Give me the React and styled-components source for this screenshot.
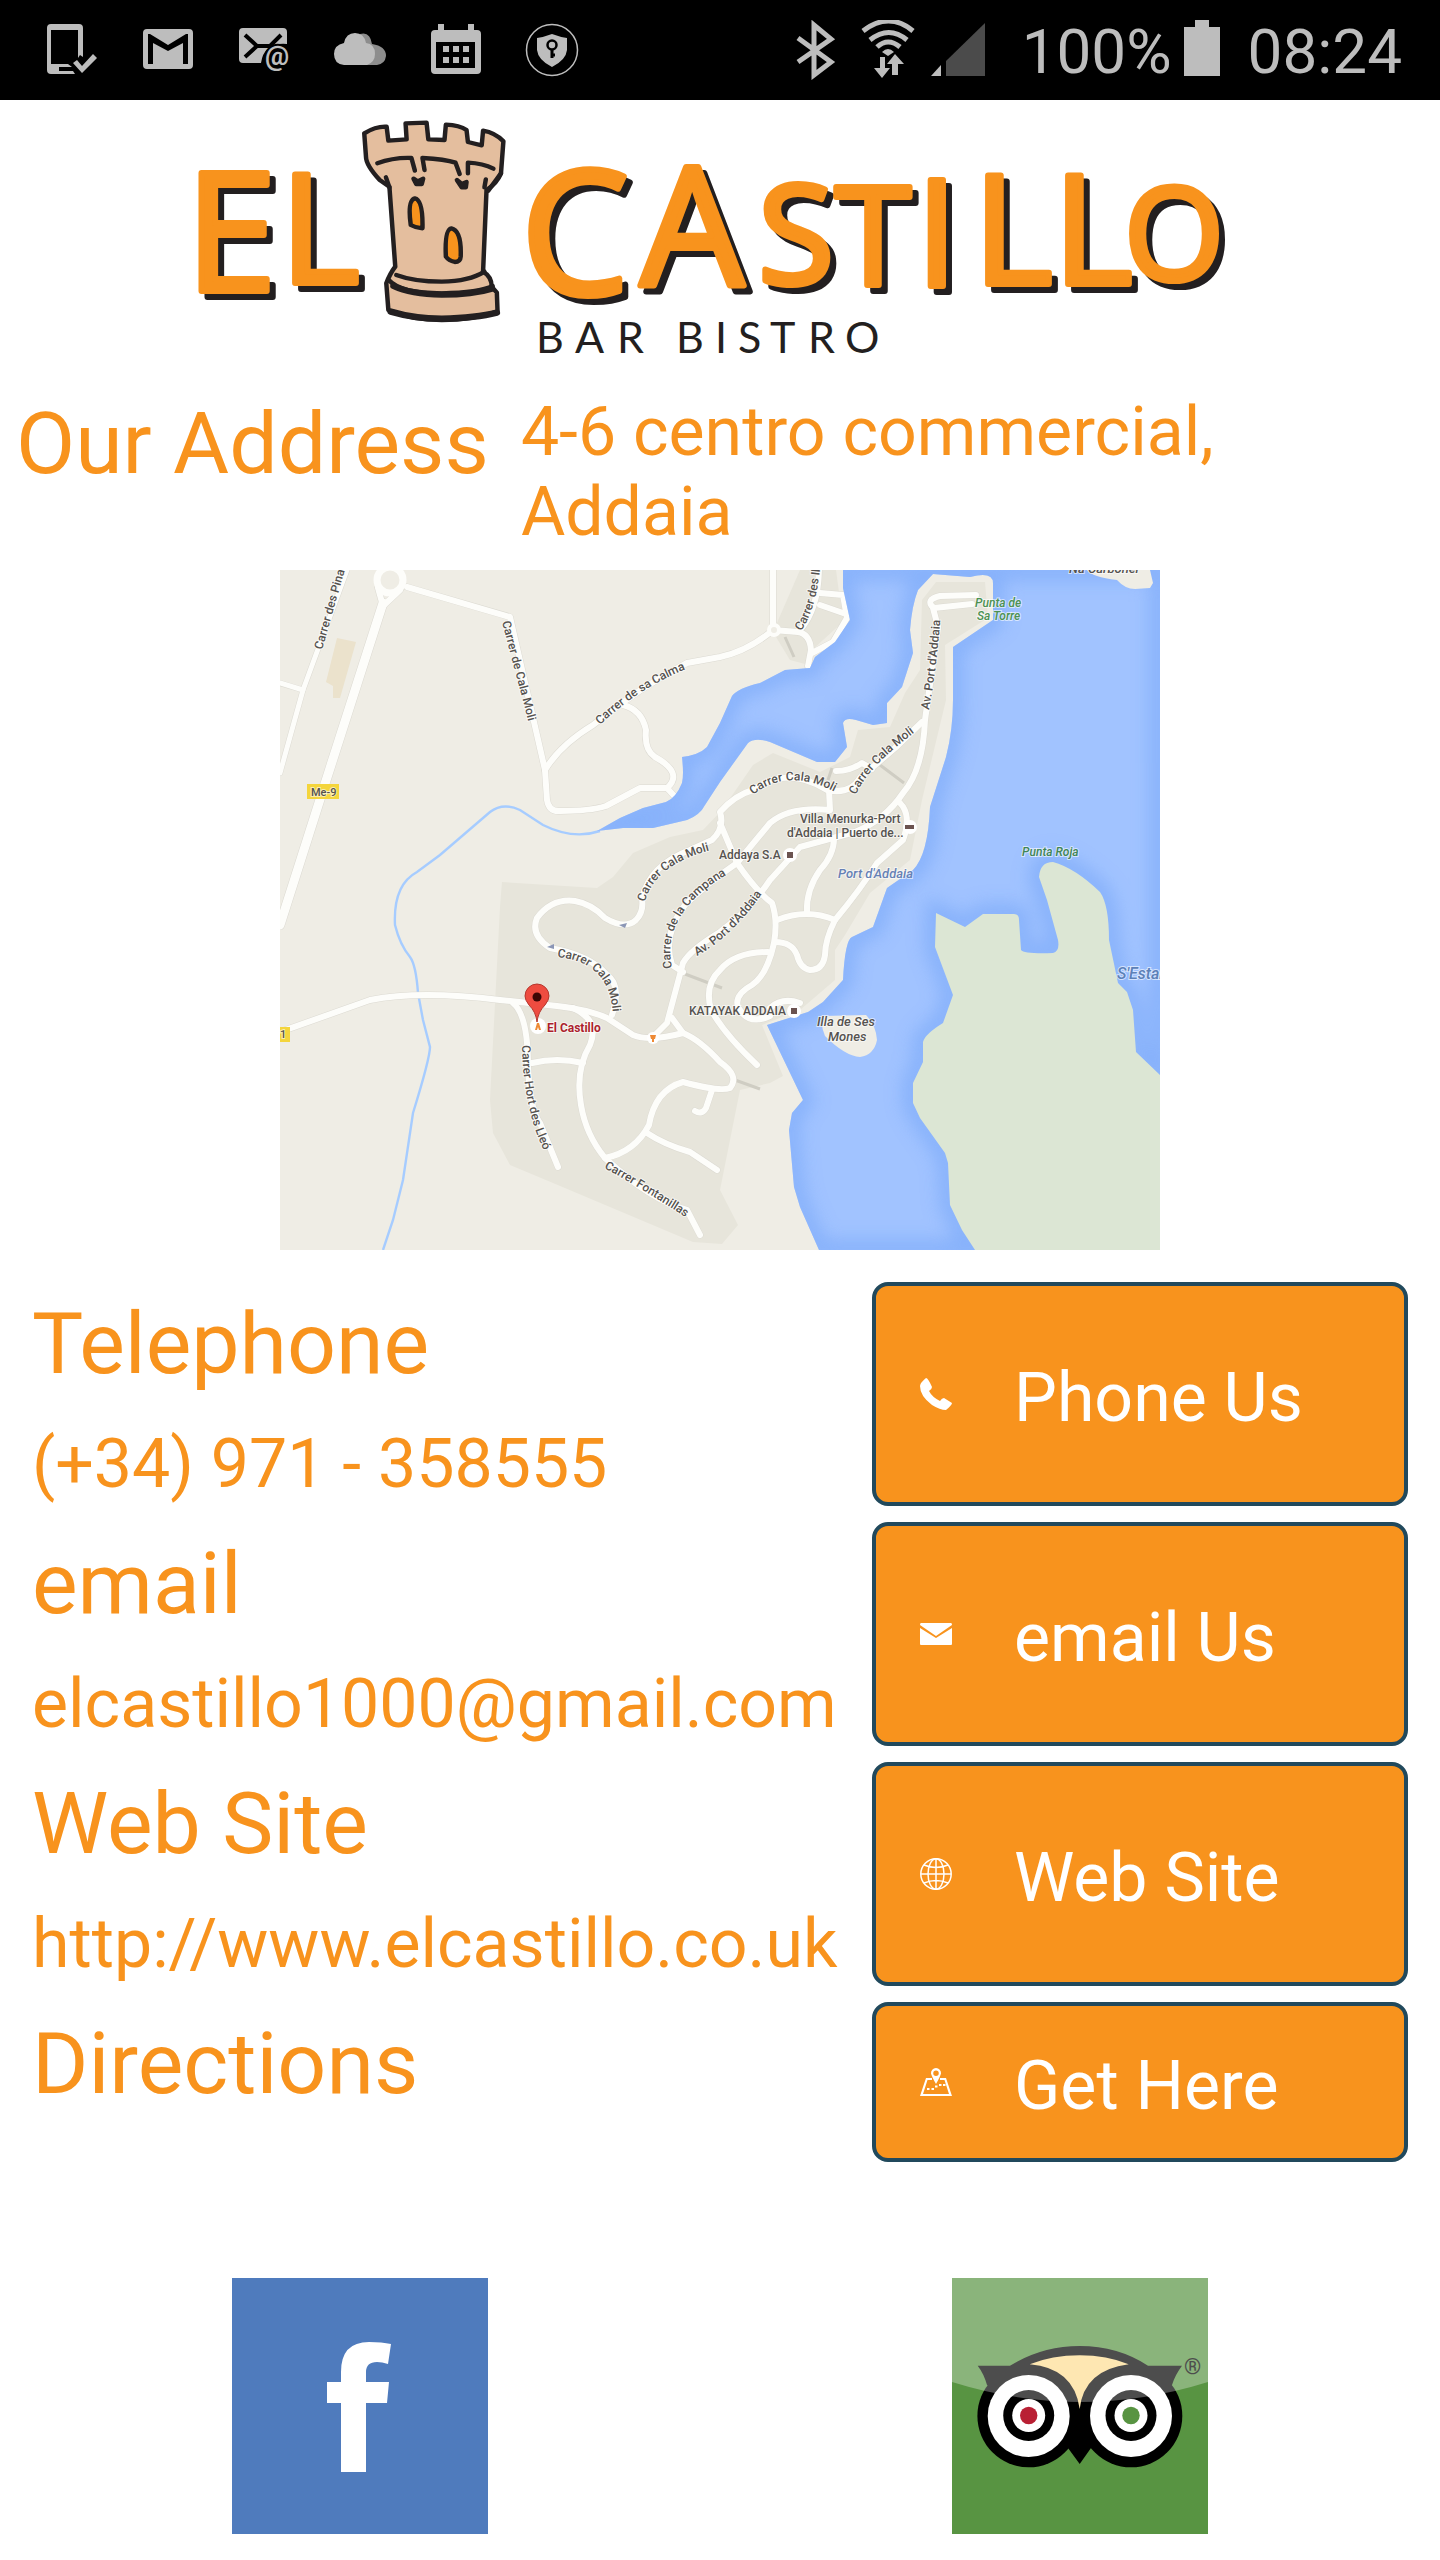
import React from "react";
import styled, { createGlobalStyle } from "styled-components";

const orange = "#f8931d";
const ink = "#231f20";
const statusGrey = "#bdbdbd";

const GlobalStyle = createGlobalStyle`
  *, *::before, *::after { box-sizing: border-box; }
  body {
    margin: 0;
    background: #fff;
    color: ${orange};
    font-family: Roboto, "Liberation Sans", sans-serif;
  }
`;

/* ---------- layout ---------- */

const Screen = styled.div`
  display: flex;
  flex-direction: column;
`;

const StatusBar = styled.header`
  display: flex;
  align-items: center;
  justify-content: space-between;
  height: 100px;
  padding: 0 38px 0 44px;
  background: #000;
  color: ${statusGrey};
  font-size: 62px;
  line-height: 76px;
`;

const Notifications = styled.div`
  display: flex;
  align-items: center;
  gap: 40px;
`;

const Indicators = styled.div`
  display: flex;
  align-items: center;
  gap: 12px;
`;

const StatusText = styled.span`
  padding: ${(p) => (p.$clock ? "0 0 0 16px" : "0 0 0 24px")};
  margin-top: 4px;
`;

const StatusIcon = styled.svg`
  display: block;
  flex: none;
  width: ${(p) => p.$width || 56}px;
  height: 60px;
  fill: ${statusGrey};
`;

const Banner = styled.div`
  padding: 0 190px 30px;
`;

const Logo = styled.svg`
  display: block;
  width: 100%;
  height: auto;
`;

const Lettering = styled.g`
  fill: ${orange};
  stroke: ${orange};
  stroke-width: 6px;
  stroke-linejoin: round;
  font-family: "Open Sans", "Noto Sans", sans-serif;
  font-weight: 400;
  text-anchor: middle;
  filter: drop-shadow(6px 6px 0 ${ink});
`;

const Tagline = styled.text`
  fill: ${ink};
  font-family: Lato, sans-serif;
  font-size: 43px;
`;

const AddressRow = styled.section`
  display: flex;
  align-items: flex-start;
  gap: 32px;
  padding: 0 16px 18px;
`;

const Heading = styled.h2`
  margin: 0;
  flex: none;
  font-size: 86px;
  font-weight: 400;
  line-height: 104px;
`;

const BodyText = styled.p`
  margin: 0;
  font-size: 68px;
  line-height: 80px;
  font-style: normal;
`;

const MapFrame = styled.figure`
  margin: 0;
  display: flex;
  justify-content: center;
`;

const MapDrawing = styled.svg`
  display: block;
  width: 880px;
  max-width: 100%;
  height: auto;
  font-family: Roboto, sans-serif;
`;

const ContactList = styled.main`
  display: flex;
  flex-direction: column;
  gap: 16px;
  padding: 32px 32px 0;
`;

const ContactRow = styled.section`
  display: grid;
  grid-template-columns: minmax(0, 1fr) 536px;
  gap: 16px;
  min-height: ${(p) => (p.$short ? 160 : 224)}px;
`;

const Details = styled.div`
  display: flex;
  flex-direction: column;
  gap: 28px;
  padding-top: 10px;
`;

const Action = styled.button`
  display: flex;
  align-items: center;
  padding: 0 44px;
  gap: 62px;
  border: 4px solid #21495c;
  border-radius: 16px;
  background: ${orange};
  color: #fff;
  font: inherit;
  font-size: 68px;
  line-height: 80px;
  cursor: pointer;
`;

const ActionLabel = styled.span`
  margin-top: 8px;
`;

const ActionIcon = styled.svg`
  display: block;
  flex: none;
  width: 32px;
  height: 32px;
  fill: #fff;
`;

const SocialRow = styled.nav`
  display: grid;
  grid-template-columns: 1fr 1fr;
  justify-items: center;
  padding: 116px 0 26px;
`;

const SocialLink = styled.a`
  display: flex;
  align-items: center;
  justify-content: center;
  width: 256px;
  height: 256px;
  background: ${(p) => p.$tone};
  color: #fff;
`;

/* ---------- map parts ---------- */

const Road = styled.path`
  fill: none;
  stroke: #fdfdfa;
  stroke-width: ${(p) => p.$w || 6}px;
  stroke-linecap: round;
  stroke-linejoin: round;
`;

const RoadEdge = styled(Road)`
  stroke: #dcdad2;
  stroke-width: ${(p) => (p.$w || 6) + 1}px;
`;

const MapLabel = styled.text`
  fill: ${(p) => p.$tone || "#55524f"};
  font-size: ${(p) => p.$size || 12}px;
  font-style: ${(p) => (p.$slanted ? "italic" : "normal")};
  font-weight: ${(p) => (p.$bold ? 700 : 500)};
  stroke: rgba(255, 255, 255, 0.6);
  stroke-width: 2px;
  paint-order: stroke;
`;

const roads = [
  ["M383 603 L323 790 L280 925", 9],
  ["M347 570 L303 690 L280 773", 5],
  ["M280 683 L303 690", 5],
  ["M378 588 L383 606 L400 590"],
  ["M407 587 L510 617 L545 770 L547 800 Q549 812 560 811 Q590 811 606 806 L640 788 L667 788 L677 799"],
  ["M545 770 Q560 745 593 725 Q640 687 687 663 L720 657 Q748 651 773 630"],
  ["M773 570 V630 L798 632 Q810 634 811 650 L808 666"],
  ["M812 653 L833 642 L847 618 L843 595 L820 593"],
  ["M820 605 L843 613"],
  ["M800 630 Q818 610 819 570"],
  ["M623 705 Q642 710 646 730 Q644 750 655 757 Q684 773 667 788"],
  ["M280 1032 L370 1000 Q420 990 500 1000 L557 1006 Q590 1010 607 1018 L633 1035 Q650 1042 683 1033 Q700 1040 720 1062 Q740 1076 730 1088 Q720 1092 683 1082 Q655 1090 649 1125 Q635 1152 605 1158"],
  ["M513 1003 Q528 1015 528 1067 Q530 1110 540 1123 L558 1167"],
  ["M573 1008 Q600 1020 590 1045 Q575 1070 581 1105 Q586 1135 605 1158 Q650 1200 687 1210 L700 1235"],
  ["M532 1063 Q557 1057 583 1063"],
  ["M647 1133 Q665 1145 690 1152 L717 1170"],
  ["M712 1090 L706 1108 Q702 1115 695 1111"],
  ["M612 1015 Q622 985 607 975 Q590 955 550 948 Q530 935 537 918 Q552 898 575 901 Q592 904 605 918 Q625 930 636 920 Q644 912 642 898 Q650 865 690 850 L712 840 Q725 828 720 812 Q735 795 753 790 Q787 765 827 790 Q850 795 860 778 L895 748 L922 722"],
  ["M933 608 L938 627 L925 720 Q923 770 903 793 Q885 820 855 832 L800 847 L770 880 Q750 910 720 932 Q690 950 683 963 L667 1023 L652 1038"],
  ["M672 1018 L683 1033"],
  ["M976 595 L940 596 Q924 600 934 608 L972 604"],
  ["M829 790 L830 810 Q790 806 770 823 L737 863 Q705 885 685 905 Q662 935 672 965 L683 972"],
  ["M720 823 L737 863 Q757 892 772 903 Q778 920 774 943 Q767 975 752 985 Q734 995 738 1007 Q748 1026 770 1016"],
  ["M834 838 Q834 855 820 870 Q806 890 807 912"],
  ["M777 920 Q807 908 835 920"],
  ["M900 803 Q912 815 903 840 L877 863 Q860 890 835 920 Q825 940 825 955 Q823 970 810 970 Q800 968 797 955 Q792 942 775 942"],
  ["M768 952 Q735 952 720 970 Q704 985 711 1010 Q725 1035 757 1065"],
  ["M836 771 Q850 771 862 763 L872 769"],
  ["M770 1008 Q782 997 800 1003"],
];

const coast =
  "M843 570 L843 588 L850 620 L835 642 L815 657 L810 668 L785 670 L760 683 Q738 688 732 696 L720 723 L707 747 Q699 755 682 757 Q684 775 682 783 Q676 798 666 802 L643 808 L620 818 L597 831 L623 828 L653 828 L687 820 Q700 815 705 805 L720 782 L748 743 Q755 737 770 742 L817 762 L835 762 L847 747 L843 723 Q845 717 856 720 L873 725 L887 723 L887 703 L902 687 L913 653 L910 630 Q912 605 918 590 L933 574 L970 577 Q993 571 993 583 L993 620 L953 647 L953 700 Q953 730 946 757 L930 807 Q928 855 913 870 L887 888 L873 927 L852 937 Q845 940 843 980 L823 1002 L808 1012 L767 1025 L803 1100 L792 1113 L789 1130 L794 1187 L800 1207 L819 1250 H1160 V570 Z";

const headland =
  "M975 1250 L962 1230 L950 1205 L948 1163 L945 1153 L920 1118 L913 1103 V1083 L923 1062 V1042 Q925 1034 943 1023 L953 995 L935 947 L936 913 L965 927 L983 914 H1014 Q1019 914 1019 920 L1021 950 Q1024 954 1053 953 Q1060 951 1058 940 L1047 900 L1039 877 Q1040 862 1053 862 Q1075 868 1100 892 Q1109 905 1109 940 L1118 983 L1127 992 L1133 1010 L1136 1052 L1160 1075 V1250 Z";

const labelPaths = [
  ["pinar", "M322 650 L352 545", "Carrer des Pinar"],
  ["cala-a", "M502 622 L532 735", "Carrer de Cala Moli"],
  ["calma", "M600 725 Q642 685 694 666", "Carrer de sa Calma"],
  ["illes", "M801 631 Q820 605 822 540", "Carrer des Illes"],
  ["port-n", "M929 710 Q938 660 941 608", "Av. Port d'Addaia"],
  ["cala-b", "M753 795 Q790 765 842 796", "Carrer Cala Moli"],
  ["cala-c", "M856 795 Q868 765 925 725", "Carrer Cala Moli"],
  ["cala-d", "M645 902 Q655 862 720 848", "Carrer Cala Moli"],
  ["campana", "M672 968 Q660 910 735 870", "Carrer de la Campana"],
  ["port-s", "M697 956 Q735 935 768 885", "Av. Port d'Addaia"],
  ["cala-e", "M557 957 Q612 962 613 1018", "Carrer Cala Moli"],
  ["hort", "M522 1045 Q523 1115 550 1162", "Carrer Hort des Lleó"],
  ["font", "M604 1168 Q645 1190 696 1224", "Carrer Fontanillas"],
];

function AreaMap() {
  return (
    <MapDrawing viewBox="280 570 880 680" role="img" aria-label="Map of Addaia showing El Castillo">
      <defs>
        <clipPath id="mapEdge"><rect x="280" y="570" width="880" height="680" /></clipPath>
        <clipPath id="waterEdge"><path d={coast} /></clipPath>
        <filter id="shoal" x="-10%" y="-10%" width="120%" height="120%"><feGaussianBlur stdDeviation="9" /></filter>
        {labelPaths.map(([id, d]) => <path key={id} id={id} d={d} />)}
      </defs>
      <g clipPath="url(#mapEdge)">
        <rect x="280" y="570" width="880" height="680" fill="#efede5" />
        <path fill="#e7e5db" d="M502 882 L597 888 L613 877 L633 853 L670 837 L703 830 L722 810 L753 765 L773 753 L820 772 L850 757 L858 730 L890 727 L905 693 L920 670 L922 600 L936 582 L985 582 L988 618 L945 645 L946 700 L922 800 L910 860 L870 893 L845 935 L835 950 L835 980 L800 1010 L762 1025 L783 1076 L770 1083 L740 1090 L720 1190 L738 1225 L722 1244 L693 1242 L553 1183 L510 1165 L493 1133 L490 1100 L500 907 Z" />
        <path fill="#e7e5db" d="M773 632 L800 570 H836 L840 600 L845 620 L812 650 L805 664 L790 660 Z" />
        <path fill="#ebe2cc" d="M337 638 L356 642 L340 698 L333 698 V686 L326 682 Z" />
        <path fill="none" stroke="#a6ccff" strokeWidth="2.4" d="M600 831 Q573 840 543 825 L520 810 Q503 802 490 812 L440 855 L417 872 Q393 885 395 925 Q400 945 410 957 Q416 965 418 993 L423 1020 L430 1047 Q430 1058 413 1113 L403 1180 L393 1220 L383 1250" />
        <path fill="none" stroke="#cfcdc3" strokeWidth="3" d="M785 637 L794 657 M880 765 L904 783 M828 780 L832 768 M685 974 L722 988 M735 1080 L760 1089" />
        {roads.map(([d, w]) => <RoadEdge key={d} d={d} $w={w} />)}
        {roads.map(([d, w]) => <Road key={d} d={d} $w={w} />)}
        <circle cx="390" cy="580" r="13" fill="#efede5" stroke="#fdfdfa" strokeWidth="7" />
        <circle cx="774" cy="630" r="5" fill="#efede5" stroke="#fdfdfa" strokeWidth="4" />

        <path d={coast} fill="#a1c3ff" />
        <g clipPath="url(#waterEdge)">
          <path d={`${coast} ${headland}`} fill="none" stroke="#7eabf9" strokeWidth="20" opacity="0.75" filter="url(#shoal)" />
        </g>
        <path d={headland} fill="#dce6d4" />
        <path fill="#efede5" d="M1087 570 Q1092 577 1117 580 Q1125 589 1135 589 L1150 588 L1153 583 L1150 570 Z M823 1016 L866 1015 Q876 1025 877 1040 Q874 1055 860 1057 Q845 1056 825 1036 Q820 1025 823 1016 Z" />

        {labelPaths.map(([id, , text]) => (
          <MapLabel key={id}><textPath href={`#${id}`}>{text}</textPath></MapLabel>
        ))}
        <MapLabel x="800" y="823">Villa Menurka-Port</MapLabel>
        <MapLabel x="787" y="837">d'Addaia | Puerto de...</MapLabel>
        <MapLabel x="719" y="859">Addaya S.A</MapLabel>
        <MapLabel x="689" y="1015">KATAYAK ADDAIA</MapLabel>
        <MapLabel x="838" y="878" $size={13} $slanted $tone="#6681b5">Port d'Addaia</MapLabel>
        <MapLabel x="975" y="607" $slanted $tone="#4c9152">Punta de</MapLabel>
        <MapLabel x="977" y="620" $slanted $tone="#4c9152">Sa Torre</MapLabel>
        <MapLabel x="1022" y="856" $slanted $tone="#3f8556">Punta Roja</MapLabel>
        <MapLabel x="1117" y="979" $size={16} $slanted $tone="#5c80b8">S'Estany</MapLabel>
        <MapLabel x="1069" y="573" $size={13} $slanted>Na Carboner</MapLabel>
        <MapLabel x="817" y="1026" $size={13} $slanted>Illa de Ses</MapLabel>
        <MapLabel x="828" y="1041" $size={13} $slanted>Mones</MapLabel>

        <rect x="307" y="784" width="32" height="15" fill="#f4d53c" />
        <MapLabel x="311" y="796" $size={11}>Me-9</MapLabel>
        <rect x="276" y="1027" width="14" height="15" fill="#f4d53c" />
        <MapLabel x="280" y="1038" $size={11}>1</MapLabel>

        <g fill="#fff">
          <circle cx="790" cy="855" r="7" />
          <circle cx="794" cy="1011" r="7" />
          <circle cx="910" cy="827" r="7" />
          <circle cx="653" cy="1038" r="6" />
          <circle cx="538" cy="1026" r="8" />
        </g>
        <path fill="#6b5350" d="M787 852 h6 v6 h-6z M791 1008 h6 v6 h-6z M905 825 h9 v4 h-9z" />
        <path fill="#ee8a35" d="M650 1035 h6 l-1 4 h-4z M652 1039 h2 v3 h-2z M535 1030 l2 -7 h2 l2 7 h-2 l-1 -3 l-1 3z" />
        <path fill="#8b96b5" d="M619 925 l8 -2 l-2 5z M547 947 l7 -3 v5z" />
        <path fill="#ee4c40" stroke="#b5372e" strokeWidth="1" d="M537 1022 Q536 1012 529 1005 Q525 1000 525 996 A12 12 0 0 1 549 996 Q549 1000 545 1005 Q538 1012 537 1022 Z" />
        <circle cx="537" cy="997" r="4.5" fill="#3d0705" />
        <MapLabel x="547" y="1032" $bold $tone="#ac1f2d">El Castillo</MapLabel>
      </g>
    </MapDrawing>
  );
}

/* ---------- logo ---------- */

const glyphs = {
  EL: [["E", 231, 291, 164], ["L", 320, 283, 152]],
  CASTILLO: [
    ["C", 575, 294, 172], ["A", 692, 285, 164], ["S", 796, 284, 138], ["T", 873, 285, 138],
    ["I", 937, 286, 148], ["L", 1013, 284, 152], ["L", 1093, 284, 152], ["O", 1174, 280, 128],
  ],
};

function CastilloLogo() {
  return (
    <Logo viewBox="190 100 1060 262" role="img" aria-label="El Castillo Bar Bistro">
      <Lettering>
        {Object.entries(glyphs).map(([word, letters]) => (
          <text key={word}>
            {letters.map(([ch, x, y, size]) => (
              <tspan key={x} x={x} y={y} fontSize={size}>{ch}</tspan>
            ))}
          </text>
        ))}
      </Lettering>
      <g transform="translate(180 100) scale(0.3444 0.3333)" fill="#e4be9e" stroke={ink} strokeWidth="13" strokeLinejoin="round" strokeLinecap="round">
        <path d="M535 100 Q570 78 600 80 L605 122 L658 118 L655 70 L716 68 L721 118 L768 120 L772 74 Q812 76 832 90 L836 126 L876 136 L880 92 Q915 98 939 124 L932 220 Q920 250 890 270 L880 515 Q905 530 905 560 L920 578 L922 635 Q850 660 760 660 Q670 660 605 630 L599 550 Q610 520 625 500 L608 260 L580 240 Q540 195 540 170 Z" />
        <path fill="none" d="M573 190 Q620 172 672 174 L682 212 M710 210 L704 174 Q770 178 800 188 L812 222 M836 220 L836 188 Q880 190 910 206 M598 232 L608 262 M888 238 L884 262 M932 220 L895 272" />
        <path fill={ink} d="M678 236 l12 8 l16 -8 l-4 16 h-16z M804 240 l14 12 l14 -6 l-2 16 h-12z" />
        <path fill={orange} d="M670 375 Q660 300 682 295 Q706 300 704 385 Q685 384 670 375 Z M772 470 Q768 388 788 385 Q818 392 815 470 Q814 486 798 486 Q780 482 772 470 Z" />
        <path fill="none" d="M628 525 Q680 545 760 545 Q840 544 884 515 M606 540 Q640 580 760 580 Q870 578 908 558" />
        <path fill="none" strokeWidth="19" d="M620 558 Q670 583 760 584 Q850 584 905 566 M612 635 Q680 656 760 656 Q860 654 920 638" />
      </g>
      <Tagline y="353" x="536 575 617 650 676 715 738 770 808 845">BAR BISTRO</Tagline>
    </Logo>
  );
}

/* ---------- button icons ---------- */

const icons = {
  phone: <path d="M6 0 Q8 0 12 9 Q12 11 9 13 Q12 19 20 23 Q22 20 24 20 L32 25 Q32 27 26 32 Q20 32 12 27 Q0 18 0 8 Q0 5 6 0 Z" />,
  mail: <path d="M1 5 H31 Q32 5 32 7 L16 18 L0 7 Q0 5 1 5 Z M0 10 L16 20 L32 10 V26 Q32 27 31 27 H1 Q0 27 0 26 Z" />,
  globe: (
    <g fill="none" stroke="#fff" strokeWidth="1.5">
      <circle cx="16" cy="16" r="15.2" />
      <ellipse cx="16" cy="16" rx="8" ry="15.2" />
      <path d="M16 1 V31 M1 16 H31 M4 7 Q16 12 28 7 M4 25 Q16 20 28 25" />
    </g>
  ),
  map: (
    <g>
      <path fillRule="evenodd" d="M16 2 A5 5 0 0 1 21 7.500 Q20 11 16 18 Q12 11 11 7.500 A5 5 0 0 1 16 2 Z M16 4.500 A2.500 2.500 0 1 0 16 10 A2.500 2.500 0 1 0 16 4.500 Z" />
      <path d="M6 12 H12 V14 H7.500 L3 28 H29 L24.500 14 H20 V12 H26 L32 30 H0 Z M7 22 h2.500 v2 h-2.500z M11.500 22 h2.500 v2 h-2.500z M15 19.500 h2.500 v2 h-2.500z M19 18 h2.500 v2 h-2.500z M23 18 h2.500 v2 h-2.500z" />
    </g>
  ),
};

const contacts = [
  { title: "Telephone", value: "(+34) 971 - 358555", action: "Phone Us", icon: "phone" },
  { title: "email", value: "elcastillo1000@gmail.com", action: "email Us", icon: "mail" },
  { title: "Web Site", value: "http://www.elcastillo.co.uk", action: "Web Site", icon: "globe" },
  { title: "Directions", action: "Get Here", icon: "map" },
];

function Status() {
  return (
    <StatusBar>
      <Notifications>
        <StatusIcon viewBox="0 -2 56 60" aria-hidden="true">
          <path fillRule="evenodd" d="M7 2 H35 Q39 2 39 6 V35 L36 33 L34 36 V8 H7 V42 H24 L28 45 H15 V49 H29 L31 52 H7 Q3 52 3 48 V6 Q3 2 7 2 Z" />
          <path d="M29 41 L33 38 L38 44 L49 32 L53 36 L38 51 Z" />
        </StatusIcon>
        <StatusIcon viewBox="0 -2 56 60" aria-hidden="true">
          <path fillRule="evenodd" d="M7 7 H49 Q53 7 53 11 V43 Q53 47 49 47 H7 Q3 47 3 43 V11 Q3 7 7 7 Z M8 12 V42 H13 V21 L28 29 L43 21 V42 H48 V12 H46 L28 23 L10 12 Z" />
        </StatusIcon>
        <StatusIcon viewBox="0 -2 56 60" aria-hidden="true">
          <path d="M7 6 H47 Q51 6 51 10 V22 Q28 20 25 41 H7 Q3 41 3 37 V10 Q3 6 7 6 Z" />
          <path d="M9 13 L21 24 H34 L45 13 M21 24 L9 35" fill="none" stroke="#000" strokeWidth="4" />
          <text x="41" y="43" fontSize="27" fontWeight="700" textAnchor="middle" stroke="#000" strokeWidth="4" paintOrder="stroke">@</text>
        </StatusIcon>
        <StatusIcon viewBox="0 -2 56 60" aria-hidden="true">
          <path fill="#8d8d8d" d="M28 12 Q38 9 40 22 Q54 24 54 34 Q53 42 45 43 H30 Z" />
          <path d="M12 43 Q2 42 2 32 Q2 23 12 21 Q14 11 23 11 Q32 11 34 21 Q43 22 43 32 Q43 40 35 43 Z" />
        </StatusIcon>
        <StatusIcon viewBox="0 -2 56 60" aria-hidden="true">
          <path fillRule="evenodd" d="M10 2 H16 V8 H40 V2 H46 V8 H49 Q53 8 53 12 V48 Q53 52 49 52 H7 Q3 52 3 48 V12 Q3 8 7 8 H10 Z M8 20 V46 H47 V20 Z" />
          <path d="M15 24 h6 v6 h-6z M25 24 h6 v6 h-6z M35 24 h6 v6 h-6z M15 35 h6 v6 h-6z M25 35 h6 v6 h-6z M35 35 h6 v6 h-6z" />
        </StatusIcon>
        <StatusIcon viewBox="0 -2 56 60" aria-hidden="true">
          <circle cx="28" cy="28" r="25.500" fill="none" stroke={statusGrey} strokeWidth="1.500" />
          <path d="M28 12 Q36 15 43 16 V28 Q42 38 28 45 Q14 38 13 28 V16 Q20 15 28 12 Z" />
          <path d="M28 27 V36 M28 33 H31" stroke="#000" strokeWidth="3" />
          <circle cx="28" cy="23" r="4.500" fill="none" stroke="#000" strokeWidth="2.500" />
        </StatusIcon>
      </Notifications>
      <Indicators>
        <StatusIcon $width={52} viewBox="0 -2 52 60" aria-hidden="true">
          <path d="M4 16 L37 40 L20 53 V3 L37 17 L4 40" fill="none" stroke={statusGrey} strokeWidth="5" />
        </StatusIcon>
        <StatusIcon $width={60} viewBox="0 -2 60 60" aria-hidden="true">
          <g fill="none" stroke={statusGrey} strokeWidth="5">
            <path d="M5 9 Q31 -11 55 9" />
            <path d="M12 18 Q31 3 49 18" />
            <path d="M19 25 Q30 15 42 25" />
          </g>
          <path d="M24 30 Q30 24 36 30 L30 34 Z M22 35 h5 v11 h5 l-8 10 l-8 -10 h6z M34 53 v-11 h-5 l8 -10 l9 10 h-6 v11z" />
        </StatusIcon>
        <StatusIcon viewBox="0 -2 56 60" aria-hidden="true">
          <path fill="#4b4b4b" d="M16 39 L55 1 V54 H16 Z" />
          <path d="M1 54 L11 43 V54 Z" />
        </StatusIcon>
        <StatusText>100%</StatusText>
        <StatusIcon $width={36} viewBox="0 -2 36 60" aria-hidden="true">
          <path d="M11 -2 H25 V5 H36 V54 H0 V5 H11 Z" />
        </StatusIcon>
        <StatusText $clock>08:24</StatusText>
      </Indicators>
    </StatusBar>
  );
}

function FacebookMark() {
  return (
    <svg width="256" height="256" viewBox="0 0 256 256" fill="#fff" aria-hidden="true">
      <path d="M109 194 V125 H95 V104 H109 V94 Q109 64 137 64 Q150 64 159 66 L156 86 Q150 84 145 84 Q134 84 134 94 V104 H157 L155 125 H134 V194 Z" />
    </svg>
  );
}

function OwlBadge() {
  return (
    <svg width="256" height="256" viewBox="0 0 256 256" aria-hidden="true">
      <path d="M25.700 87.700 H58 Q90 68 127.700 68 Q166 68 196 87.700 H230 Q223 97 220 107 L179 138 L139 170 L127.700 186 L116 170 L76.700 138 L35 107 Q32 96 25.700 87.700 Z" />
      {[[76.7, "#b92034"], [179, "#589442"]].map(([cx, pupil]) => (
        <g key={cx}>
          <circle cx={cx} cy="138" r="51.300" />
          <circle cx={cx} cy="138" r="41" fill="#fff" />
          <circle cx={cx} cy="137.500" r="25.500" />
          <circle cx={cx} cy="137.500" r="16.500" fill="#fff" />
          <circle cx={cx} cy="137.500" r="8.700" fill={pupil} />
        </g>
      ))}
      <text x="240.700" y="96" fontSize="22" fontWeight="700" textAnchor="middle" fill="#000">®</text>
      <path fill="#fff" fillOpacity="0.3" d="M0 0 H256 V104 Q128 144 0 104 Z" />
      <path fill="#fee7b2" d="M77.700 86.300 Q100 77.300 127.700 77.300 Q155 77.300 176.700 86.300 Q132 92 127.700 131 Q122 90 77.700 86.300 Z" />
    </svg>
  );
}

export default function App() {
  return (
    <Screen>
      <GlobalStyle />
      <Status />
      <Banner><CastilloLogo /></Banner>
      <AddressRow>
        <Heading>Our Address</Heading>
        <BodyText as="address">4-6 centro commercial, Addaia</BodyText>
      </AddressRow>
      <MapFrame><AreaMap /></MapFrame>
      <ContactList>
        {contacts.map((c) => (
          <ContactRow key={c.title} $short={!c.value}>
            <Details>
              <Heading>{c.title}</Heading>
              {c.value && <BodyText>{c.value}</BodyText>}
            </Details>
            <Action type="button">
              <ActionIcon viewBox="0 0 32 32" aria-hidden="true">{icons[c.icon]}</ActionIcon>
              <ActionLabel>{c.action}</ActionLabel>
            </Action>
          </ContactRow>
        ))}
      </ContactList>
      <SocialRow aria-label="Social">
        <SocialLink href="#facebook" aria-label="Facebook" $tone="#4f7bbd"><FacebookMark /></SocialLink>
        <SocialLink href="#tripadvisor" aria-label="TripAdvisor" $tone="#589442"><OwlBadge /></SocialLink>
      </SocialRow>
    </Screen>
  );
}
